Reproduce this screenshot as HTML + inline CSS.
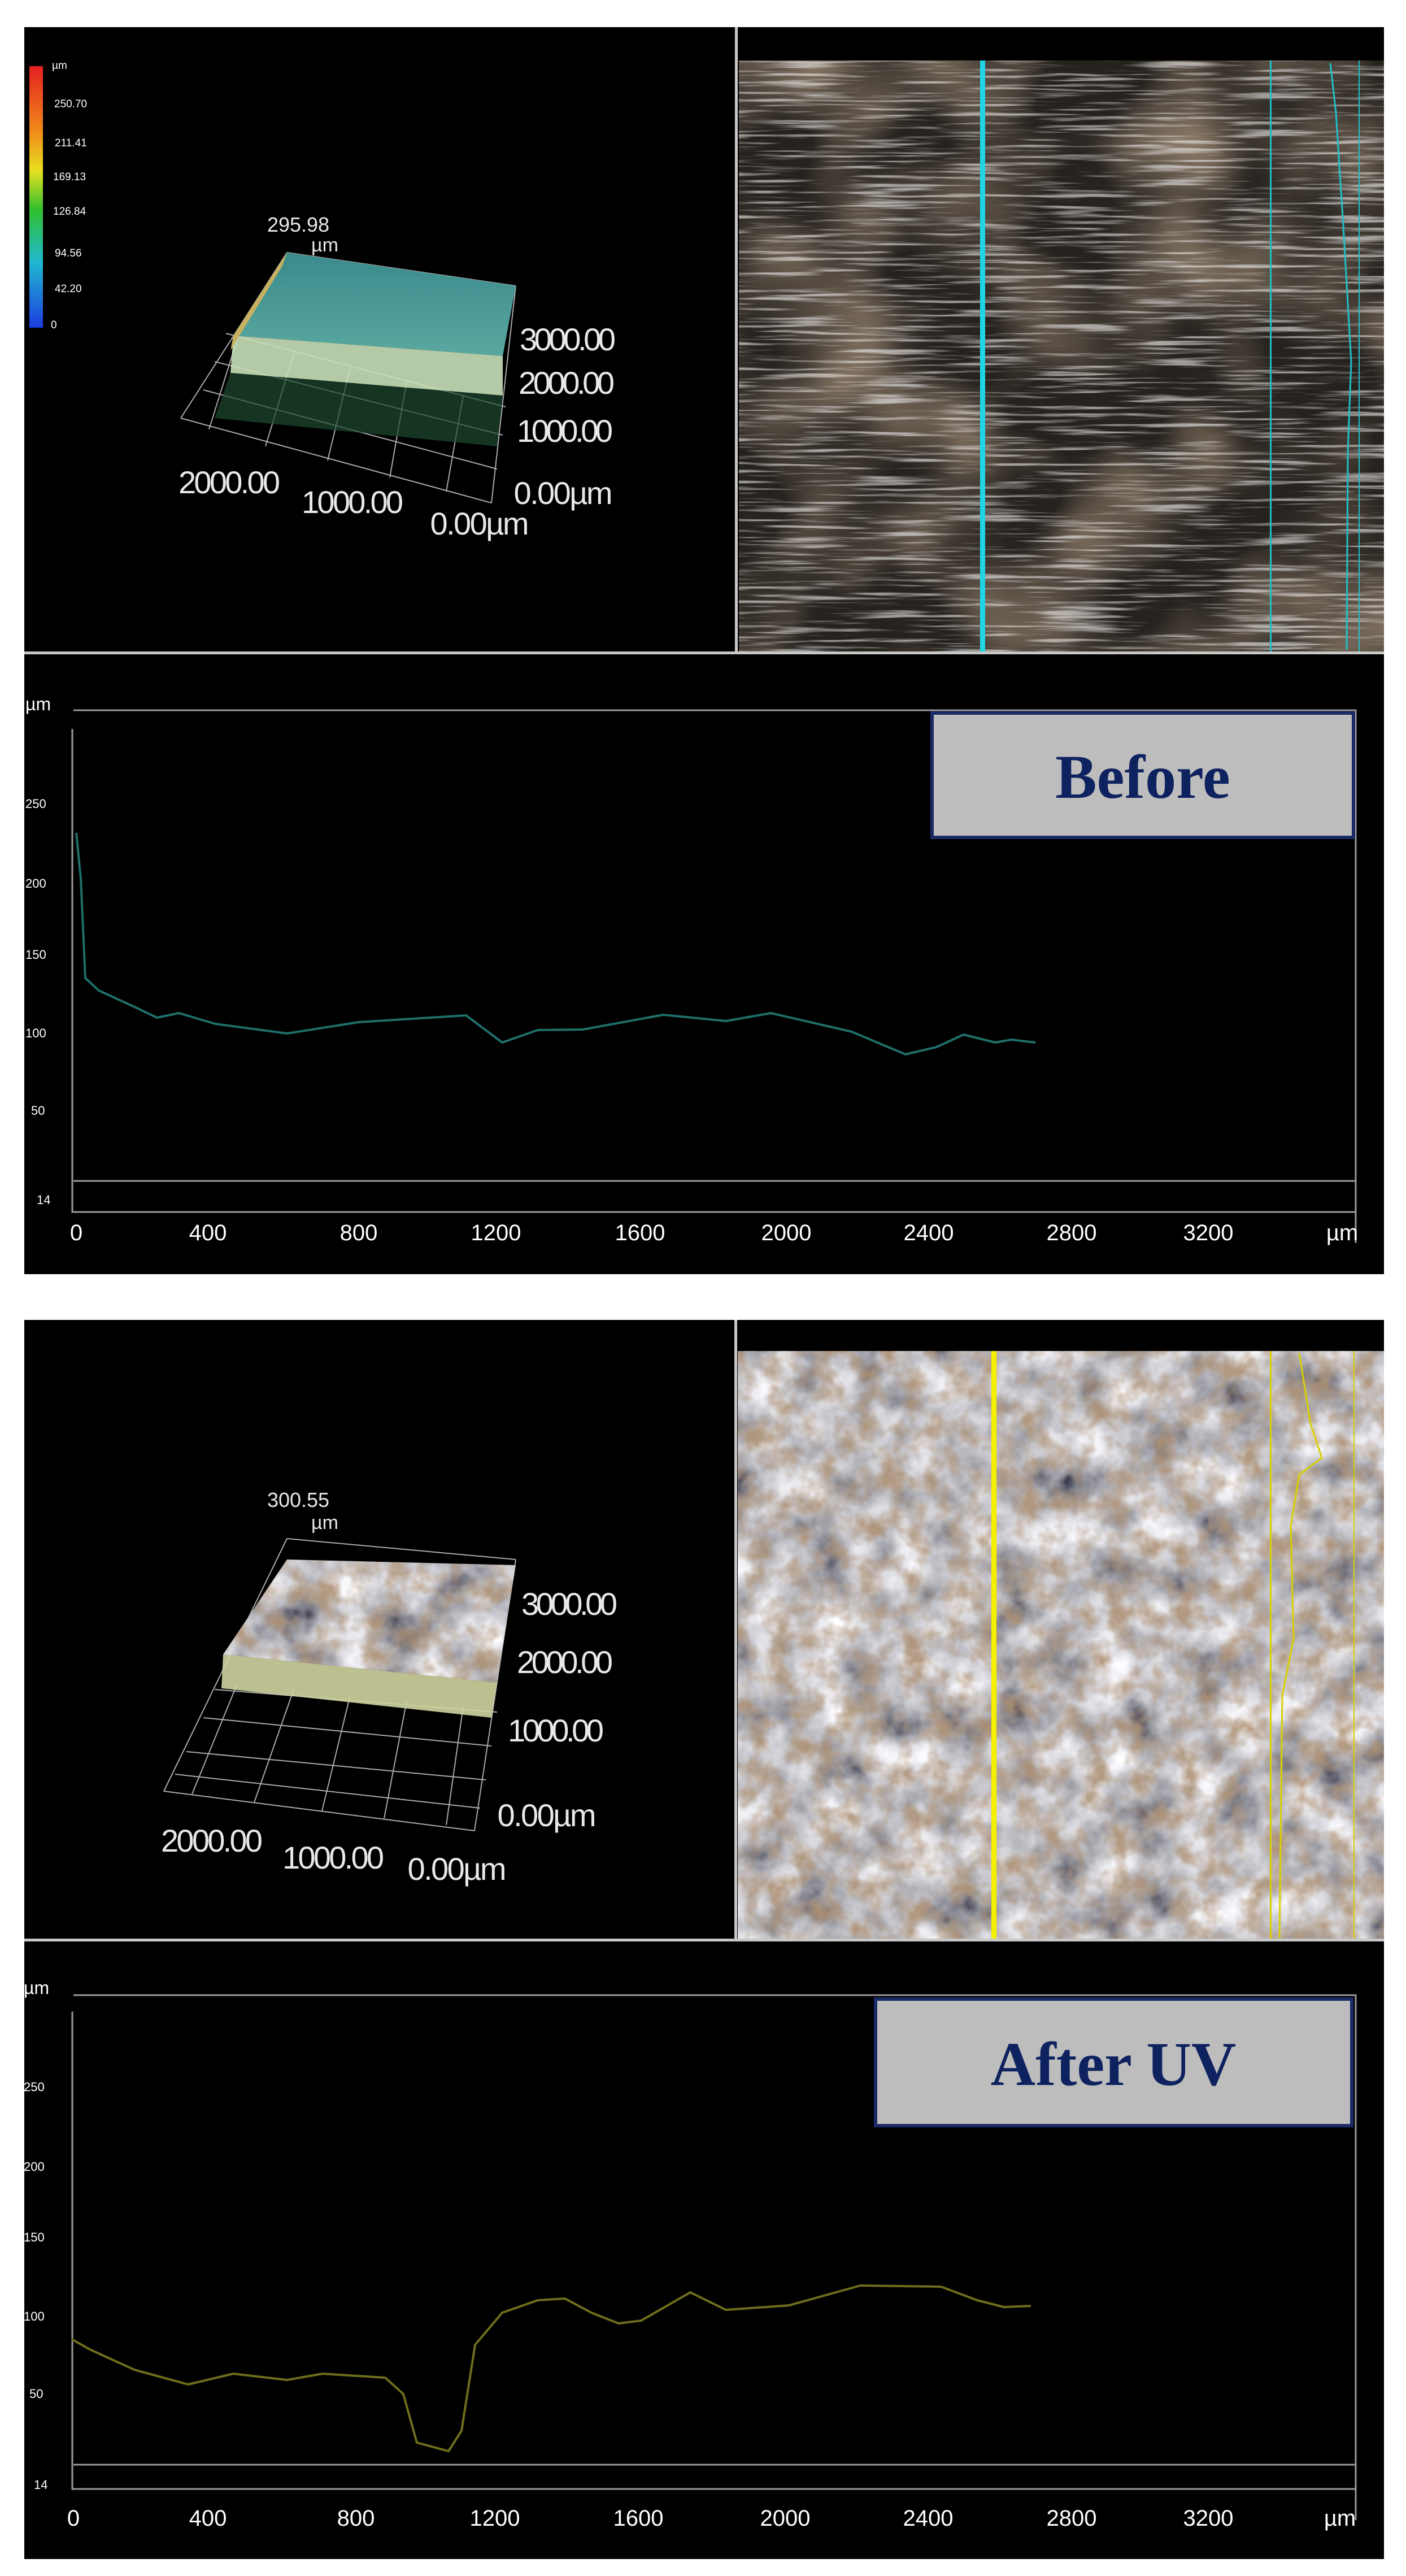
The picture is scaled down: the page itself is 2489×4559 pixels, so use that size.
<!DOCTYPE html>
<html><head><meta charset="utf-8">
<style>
html,body{margin:0;padding:0;background:#fff;}
body{width:2489px;height:4559px;overflow:hidden;}
svg{display:block;}
.lbl{font-family:"Liberation Sans",sans-serif;fill:#fff;}
.cond{font-family:"Liberation Sans",sans-serif;fill:#e8e8e8;}
</style></head><body>
<svg width="2489" height="4559" viewBox="0 0 2489 4559" xmlns="http://www.w3.org/2000/svg">
<defs>
<filter id="streak" x="0" y="0" width="100%" height="100%">
 <feTurbulence type="fractalNoise" baseFrequency="0.006 0.16" numOctaves="3" seed="3"/>
 <feColorMatrix values="0 0 0 0 0.9  0 0 0 0 0.9  0 0 0 0 0.9  4 0 0 0 -2.0"/>
</filter>
<filter id="blot" x="0" y="0" width="100%" height="100%">
 <feTurbulence type="fractalNoise" baseFrequency="0.005" numOctaves="2" seed="7"/>
 <feColorMatrix values="0 0 0 0 0.32  0 0 0 0 0.24  0 0 0 0 0.17  1.8 0 0 0 -0.7"/>
</filter>
<filter id="mottle" x="0" y="0" width="100%" height="100%">
 <feTurbulence type="fractalNoise" baseFrequency="0.012" numOctaves="4" seed="11"/>
 <feColorMatrix values="1.3 0 0 0 -0.1  1.3 0 0 0 -0.1  1.3 0 0 0 -0.06  0 0 0 0 1"/>
</filter>
<filter id="brown" x="0" y="0" width="100%" height="100%">
 <feTurbulence type="fractalNoise" baseFrequency="0.025" numOctaves="3" seed="5"/>
 <feColorMatrix values="0 0 0 0 0.42  0 0 0 0 0.28  0 0 0 0 0.17  0 2.5 0 0 -1.0"/>
</filter>
<clipPath id="cp2"><polygon points="508,2760 913,2770 880,2978 395,2928"/></clipPath>
<linearGradient id="cbar" x1="0" y1="0" x2="0" y2="1">
 <stop offset="0" stop-color="#e52020"/><stop offset="0.25" stop-color="#f08a1a"/>
 <stop offset="0.4" stop-color="#e8e020"/><stop offset="0.55" stop-color="#30c030"/>
 <stop offset="0.75" stop-color="#20b8d0"/><stop offset="1" stop-color="#1c3ce0"/>
</linearGradient>
<linearGradient id="surf1" x1="0" y1="0" x2="0" y2="1">
 <stop offset="0" stop-color="#3a8a8c"/><stop offset="1" stop-color="#5aa8a0"/>
</linearGradient>
</defs>

<rect width="2489" height="4559" fill="#fff"/>

<!-- ===== BLOCK 1 ===== -->
<rect x="43" y="48" width="2407" height="2207" fill="#000"/>
<g>
 <rect x="1308" y="107" width="1142" height="1049" fill="#26221e"/>
 <rect x="1308" y="107" width="1142" height="1049" filter="url(#blot)"/>
 <rect x="1308" y="107" width="1142" height="1049" filter="url(#streak)" opacity="0.6"/>
 <rect x="1735" y="107" width="9" height="1049" fill="#1fd6e6"/>
 <rect x="2248" y="107" width="3" height="1049" fill="#20c0c8"/>
 <path d="M2355 112 L2365 200 L2378 400 L2392 640 L2386 800 L2384 1150" stroke="#20c0c8" stroke-width="3" fill="none"/>
 <rect x="2405" y="107" width="2" height="1049" fill="#20c0c8"/>
</g>
<rect x="1301" y="48" width="5" height="1110" fill="#c8c8c8"/>
<rect x="43" y="1153" width="2407" height="5" fill="#c8c8c8"/>

<rect x="52" y="117" width="24" height="463" fill="url(#cbar)"/>
<g class="lbl" font-size="19">
<text x="92" y="122">µm</text>
<text x="96" y="190">250.70</text>
<text x="97" y="259">211.41</text>
<text x="94" y="319">169.13</text>
<text x="94" y="380">126.84</text>
<text x="97" y="454">94.56</text>
<text x="97" y="517">42.20</text>
<text x="90" y="581">0</text>
</g>
<g stroke="#aaa" stroke-width="2" fill="none">
 <path d="M508 447 L913 506"/>
 <path d="M508 447 L320 740"/>
 <path d="M320 740 L870 890"/>
 <path d="M913 506 L870 890"/>
 <path d="M380 640 L890 770 M360 690 L880 830 M400 590 L895 720"/>
 <path d="M420 600 L370 760 M520 625 L470 790 M620 650 L580 815 M720 675 L690 845 M820 700 L790 870"/>
</g>
<polygon points="508,447 913,506 890,630 413,594" fill="url(#surf1)"/>
<polygon points="413,594 890,630 890,700 408,660" fill="#c8e0b8" opacity="0.9"/>
<polygon points="408,660 890,700 880,790 380,740" fill="#1e4a30" opacity="0.7"/>
<polygon points="508,447 413,594 408,620 500,470" fill="#c9b060"/>
<g class="cond" font-size="56">
<text x="528" y="410" text-anchor="middle" font-size="36">295.98</text>
<text x="575" y="445" text-anchor="middle" font-size="34">µm</text>
<text x="1005" y="620" text-anchor="middle" textLength="170">3000.00</text>
<text x="1003" y="697" text-anchor="middle" textLength="170">2000.00</text>
<text x="1000" y="782" text-anchor="middle" textLength="170">1000.00</text>
<text x="997" y="892" text-anchor="middle" textLength="175">0.00µm</text>
<text x="406" y="873" text-anchor="middle" textLength="180">2000.00</text>
<text x="624" y="908" text-anchor="middle" textLength="180">1000.00</text>
<text x="849" y="946" text-anchor="middle" textLength="175">0.00µm</text>
</g>

<g stroke="#9a9a9a" stroke-width="3" fill="none">
 <path d="M130 1257 L2400 1257 L2400 2200"/>
 <path d="M130 2090 L2400 2090"/>
 <path d="M128 1290 L128 2145 L2400 2145"/>
</g>
<rect x="1650" y="1262" width="746" height="220" fill="#bdbdbd" stroke="#1a2a66" stroke-width="6"/>
<text x="2023" y="1412" text-anchor="middle" font-family="Liberation Serif,serif" font-weight="bold" font-size="110" fill="#0e2260">Before</text>
<g class="lbl" font-size="22">
<text x="45" y="1257" font-size="32">µm</text>
<text x="45" y="1430">250</text>
<text x="45" y="1571">200</text>
<text x="45" y="1697">150</text>
<text x="45" y="1836">100</text>
<text x="55" y="1973">50</text>
<text x="65" y="2131">14</text>
</g>
<g class="lbl" font-size="40" text-anchor="middle">
<text x="135" y="2195">0</text><text x="368" y="2195">400</text><text x="635" y="2195">800</text>
<text x="878" y="2195">1200</text><text x="1133" y="2195">1600</text><text x="1392" y="2195">2000</text>
<text x="1644" y="2195">2400</text><text x="1897" y="2195">2800</text><text x="2139" y="2195">3200</text>
<text x="2376" y="2195">µm</text>
</g>
<polyline fill="none" stroke="#1f6f6a" stroke-width="4" stroke-linejoin="round" points="135,1474 143,1555 151,1731 175,1753 238,1782 278,1801 317,1793 381,1812 508,1829 635,1809 825,1797 889,1845 952,1823 1032,1822 1174,1796 1285,1807 1365,1793 1508,1826 1603,1866 1658,1853 1706,1831 1762,1845 1790,1840 1833,1845"/>

<!-- ===== BLOCK 2 ===== -->
<rect x="43" y="2336" width="2407" height="2193" fill="#000"/>
<g>
 <rect x="1306" y="2391" width="1144" height="1040" fill="#8a8580" filter="url(#mottle)"/>
 <rect x="1306" y="2391" width="1144" height="1040" filter="url(#brown)" opacity="0.85"/>
 <rect x="1755" y="2391" width="9" height="1040" fill="#f4f000"/>
 <rect x="2248" y="2391" width="3" height="1040" fill="#d8d000"/>
 <path d="M2300 2395 L2320 2520 L2340 2580 L2300 2610 L2285 2700 L2290 2900 L2270 3000 L2265 3430" stroke="#d8d000" stroke-width="3" fill="none"/>
 <rect x="2396" y="2391" width="2" height="1040" fill="#d8d000"/>
</g>
<rect x="1300" y="2336" width="5" height="1100" fill="#c8c8c8"/>
<rect x="43" y="3431" width="2407" height="5" fill="#c8c8c8"/>

<g stroke="#aaa" stroke-width="2" fill="none">
 <path d="M508 2723 L913 2760"/>
 <path d="M508 2723 L290 3170"/>
 <path d="M290 3170 L840 3240"/>
 <path d="M913 2760 L840 3240"/>
 <path d="M360 3040 L870 3090 M330 3100 L860 3150 M380 2990 L880 3030 M310 3140 L850 3200"/>
 <path d="M420 2980 L340 3175 M520 2990 L450 3190 M620 3000 L570 3205 M720 3010 L680 3218 M820 3020 L790 3230"/>
</g>
<g clip-path="url(#cp2)">
 <rect x="390" y="2755" width="530" height="230" fill="#888" filter="url(#mottle)"/>
 <rect x="390" y="2755" width="530" height="230" filter="url(#brown)" opacity="0.85"/>
</g>
<polygon points="395,2928 880,2978 870,3040 392,2988" fill="#d0d4a0" opacity="0.9"/>
<g class="cond" font-size="56">
<text x="528" y="2667" text-anchor="middle" font-size="36">300.55</text>
<text x="575" y="2706" text-anchor="middle" font-size="34">µm</text>
<text x="1008" y="2858" text-anchor="middle" textLength="170">3000.00</text>
<text x="1000" y="2961" text-anchor="middle" textLength="170">2000.00</text>
<text x="984" y="3082" text-anchor="middle" textLength="170">1000.00</text>
<text x="968" y="3232" text-anchor="middle" textLength="175">0.00µm</text>
<text x="375" y="3277" text-anchor="middle" textLength="180">2000.00</text>
<text x="590" y="3307" text-anchor="middle" textLength="180">1000.00</text>
<text x="809" y="3327" text-anchor="middle" textLength="175">0.00µm</text>
</g>

<g stroke="#9a9a9a" stroke-width="3" fill="none">
 <path d="M130 3531 L2400 3531 L2400 4460"/>
 <path d="M130 4362 L2400 4362"/>
 <path d="M128 3560 L128 4405 L2400 4405"/>
</g>
<rect x="1550" y="3538" width="843" height="224" fill="#bdbdbd" stroke="#1a2a66" stroke-width="6"/>
<text x="1971" y="3690" text-anchor="middle" font-family="Liberation Serif,serif" font-weight="bold" font-size="110" fill="#0e2260">After UV</text>
<g class="lbl" font-size="22">
<text x="42" y="3529" font-size="32">µm</text>
<text x="42" y="3701">250</text>
<text x="42" y="3842">200</text>
<text x="42" y="3967">150</text>
<text x="42" y="4107">100</text>
<text x="52" y="4244">50</text>
<text x="60" y="4405">14</text>
</g>
<g class="lbl" font-size="40" text-anchor="middle">
<text x="130" y="4470">0</text><text x="368" y="4470">400</text><text x="630" y="4470">800</text>
<text x="876" y="4470">1200</text><text x="1130" y="4470">1600</text><text x="1390" y="4470">2000</text>
<text x="1643" y="4470">2400</text><text x="1897" y="4470">2800</text><text x="2139" y="4470">3200</text>
<text x="2372" y="4470">µm</text>
</g>
<polyline fill="none" stroke="#6e6e1c" stroke-width="4" stroke-linejoin="round" points="127,4140 159,4158 238,4194 333,4220 413,4201 508,4212 571,4201 682,4208 714,4237 738,4323 794,4338 817,4302 841,4150 889,4093 952,4071 1000,4068 1047,4093 1095,4112 1135,4107 1222,4057 1285,4088 1397,4080 1523,4045 1666,4047 1730,4071 1777,4083 1825,4081"/>
</svg>
</body></html>
